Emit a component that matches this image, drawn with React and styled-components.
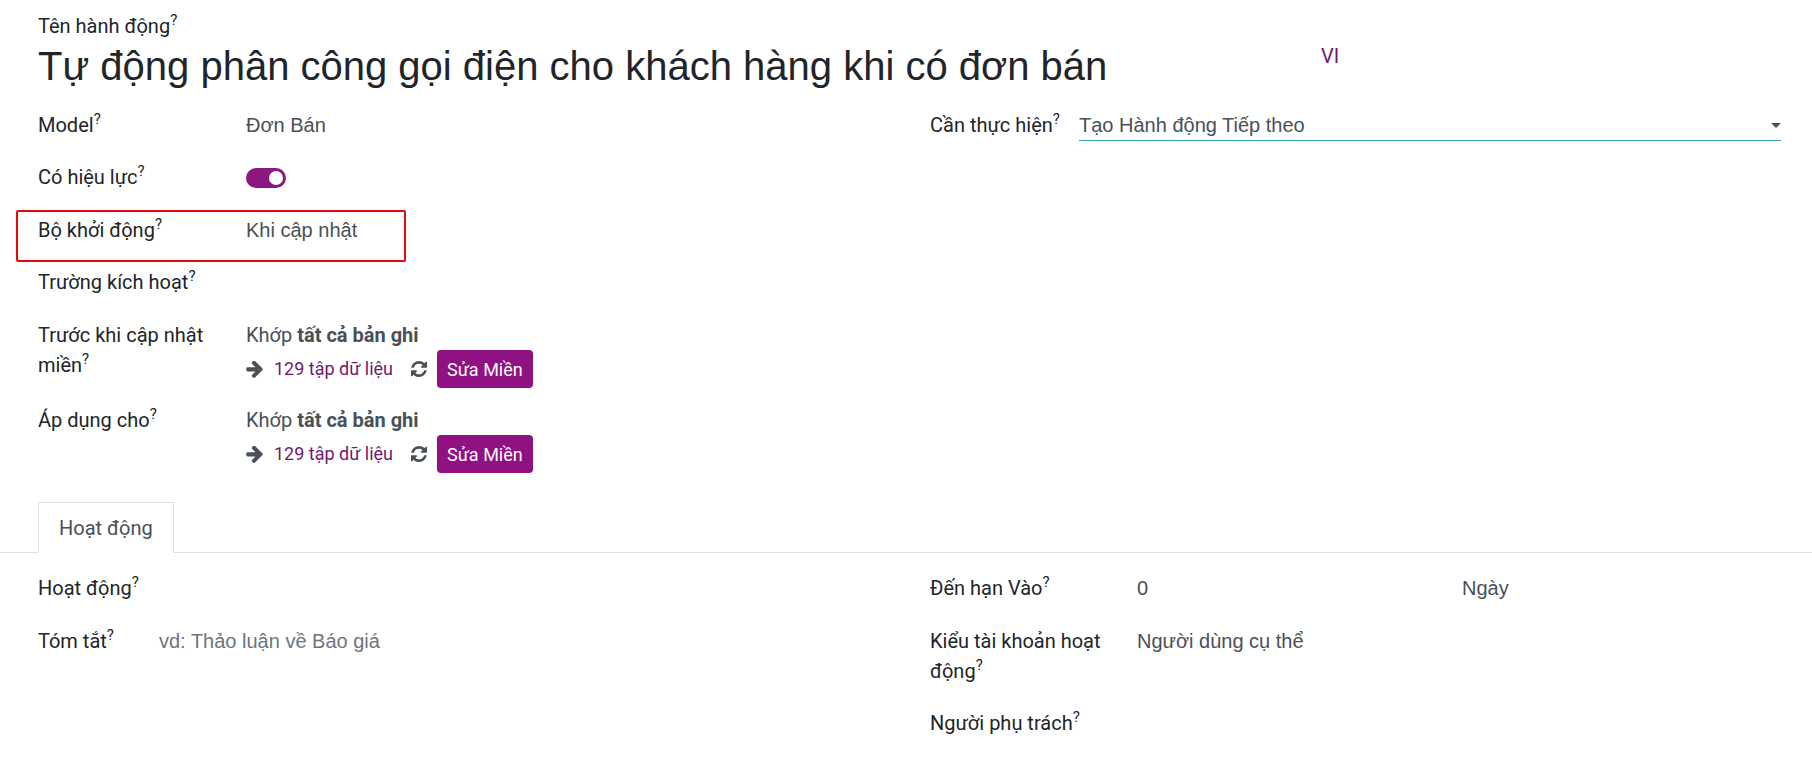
import React from 'react'
import styled, { createGlobalStyle } from 'styled-components'

const GlobalStyle = createGlobalStyle`
*, *::before, *::after {
  box-sizing: border-box;
}
body {
  margin: 0;
  background: #fff;
  color: #495057;
  font-family: Roboto, sans-serif;
  font-size: 20px;
  line-height: 30px;
}
`

const Form = styled.form`
padding-top: 11px;
`
const Header = styled.div`
padding: 0 31px 0 38px;
`
const TitleRow = styled.div`
display: flex;
align-items: flex-start;
width: 75%;
padding-right: 6px;
`
const TitleInput = styled.input`
flex: 1;
min-width: 0;
height: 50px;
padding: 0;
border: none;
outline: none;
background: transparent;
color: #212529;
font-family: "Liberation Sans", Arial, sans-serif;
font-size: 40px;
`
const LangButton = styled.button`
padding: 0;
border: none;
background: none;
color: #71196f;
font-family: inherit;
font-size: 20px;
line-height: 30px;
cursor: pointer;
`
const Columns = styled.div`
display: grid;
grid-template-columns: 1fr 1fr;
align-items: start;
gap: 41px;
padding: 0 31px 0 38px;
margin-top: 20px;
`
const MainColumns = styled(Columns)`
margin-top: 19px;
`
const Group = styled.div`
display: flex;
flex-direction: column;
gap: 17px;
`
const Row = styled.div`
display: grid;
grid-template-columns: ${(props) => props.$label || '208px'} 1fr;
align-items: start;
position: relative;
`
const MarkedRow = styled(Row)`
&::after {
  content: '';
  position: absolute;
  top: -5px;
  bottom: -12px;
  left: -22px;
  width: 390px;
  border: 2px solid #e8070b;
  border-radius: 2px;
  pointer-events: none;
}
`
const LabelText = styled.label`
display: block;
padding: 0 0 5px;
color: #212529;
`
const NameLabel = styled(LabelText)`
padding: 0;
`
const Help = styled.sup`
font-size: 15px;
line-height: 0;
vertical-align: 8px;
`
const TextInput = styled.input`
width: 100%;
min-width: 0;
height: 30px;
padding: 0;
border: none;
outline: none;
background: transparent;
color: #495057;
font-family: "Liberation Sans", Arial, sans-serif;
font-size: 20px;
&::placeholder {
  color: #6c757d;
  opacity: 1;
}
`
const RelationInput = styled(TextInput)`
height: 36px;
padding-bottom: 6px;
`
const SelectBox = styled.select`
appearance: none;
width: 100%;
height: 30px;
padding: 0;
border: none;
border-radius: 0;
outline: none;
background: transparent;
color: #495057;
font-family: "Liberation Sans", Arial, sans-serif;
font-size: 20px;
line-height: 30px;
`
const ActiveSelect = styled.div`
display: grid;
align-items: center;
border-bottom: 1px solid #2f9fa9;
height: 31px;
& > * {
  grid-area: 1 / 1;
}
`
const Caret = styled.span`
justify-self: end;
border: 5px solid transparent;
border-top-color: #495057;
border-bottom: none;
pointer-events: none;
`
const Toggle = styled.input`
appearance: none;
display: flex;
align-items: center;
justify-content: flex-end;
width: 40px;
height: 20px;
margin: 6px 0 10px;
padding: 3px;
border-radius: 10px;
background: #8c187f;
&::before {
  content: '';
  width: 14px;
  height: 14px;
  border-radius: 50%;
  background: #fff;
}
&:not(:checked) {
  justify-content: flex-start;
  background: #adb5bd;
}
`
const DomainActions = styled.div`
display: flex;
align-items: center;
height: 38px;
font-size: 18px;
`
const RecordLink = styled.a`
margin: 0 18px 0 11px;
color: #71196f;
text-decoration: none;
`
const IconButton = styled.button`
display: flex;
margin-right: 10px;
padding: 0;
border: none;
background: none;
color: #495057;
cursor: pointer;
`
const EditButton = styled.button`
height: 38px;
padding: 0 10px;
border: none;
border-radius: 4px;
background: #8f1182;
color: #fff;
font-family: inherit;
font-size: 18px;
cursor: pointer;
`
const TabBar = styled.div`
display: flex;
margin-top: 29px;
padding-left: 38px;
border-bottom: 1px solid #dee2e6;
`
const Tab = styled.button`
height: 51px;
margin-bottom: -1px;
padding: 0 20px;
border: 1px solid #dee2e6;
border-bottom-color: #fff;
background: #fff;
color: #495057;
font-family: inherit;
font-size: 20px;
`
const DueFields = styled.div`
display: grid;
grid-template-columns: 1fr 1fr;
gap: 6px;
height: 36px;
`

const ArrowIcon = () => (
  <svg width="17" height="17" viewBox="128 211 1472 1528" fill="currentColor" aria-hidden="true">
    <path d="M1600 960q0 54-37 91l-651 651q-39 37-91 37-51 0-90-37l-75-75q-38-38-38-91t38-91l293-293h-704q-52 0-84.5-37.5t-32.5-90.5v-128q0-53 32.5-90.5t84.5-37.5h704l-293-294q-38-36-38-90t38-90l75-75q38-38 90-38 53 0 91 38l651 651q37 35 37 90z" />
  </svg>
)

const RefreshIcon = () => (
  <svg width="16" height="16" viewBox="0 0 1536 1536" fill="currentColor" aria-hidden="true">
    <path d="M1511 928q0 5-1 7-64 268-268 434.5t-478 166.5q-146 0-282.5-55t-243.5-157l-129 129q-19 19-45 19t-45-19-19-45v-448q0-26 19-45t45-19h448q26 0 45 19t19 45-19 45l-137 137q71 66 161 102t187 36q134 0 250-65t186-179q11-17 53-117 8-23 30-23h192q13 0 22.5 9.5t9.5 22.5zm25-800v448q0 26-19 45t-45 19h-448q-26 0-45-19t-19-45 19-45l138-138q-148-137-349-137-134 0-250 65t-186 179q-11 17-53 117-8 23-30 23h-199q-13 0-22.5-9.5t-9.5-22.5v-7q65-268 270-434.5t480-166.5q146 0 284 55.5t245 156.5l130-129q19-19 45-19t45 19 19 45z" />
  </svg>
)

const Label = ({ id, children }) => (
  <LabelText htmlFor={id}>{children}<Help>?</Help></LabelText>
)

const Select = ({ id, value }) => (
  <SelectBox id={id} defaultValue={value}>
    <option>{value}</option>
  </SelectBox>
)

const Domain = ({ id }) => (
  <div>
    <div>Khớp <b>tất cả bản ghi</b></div>
    <DomainActions>
      <ArrowIcon />
      <RecordLink href="#records">129 tập dữ liệu</RecordLink>
      <IconButton type="button" aria-label="Làm mới"><RefreshIcon /></IconButton>
      <EditButton type="button" id={id}>Sửa Miền</EditButton>
    </DomainActions>
  </div>
)

const App = () => {
  return (
    <Form>
      <GlobalStyle />
      <Header>
        <NameLabel htmlFor="name">Tên hành động<Help>?</Help></NameLabel>
        <TitleRow>
          <TitleInput id="name" defaultValue="Tự động phân công gọi điện cho khách hàng khi có đơn bán" />
          <LangButton type="button">VI</LangButton>
        </TitleRow>
      </Header>

      <MainColumns>
        <Group>
          <Row>
            <Label id="model">Model</Label>
            <TextInput id="model" defaultValue="Đơn Bán" />
          </Row>
          <Row>
            <Label id="active">Có hiệu lực</Label>
            <Toggle id="active" type="checkbox" defaultChecked />
          </Row>
          <MarkedRow>
            <Label id="trigger">Bộ khởi động</Label>
            <Select id="trigger" value="Khi cập nhật" />
          </MarkedRow>
          <Row>
            <Label id="fields">Trường kích hoạt</Label>
            <RelationInput id="fields" />
          </Row>
          <Row>
            <Label id="before">Trước khi cập nhật miền</Label>
            <Domain id="before" />
          </Row>
          <Row>
            <Label id="apply">Áp dụng cho</Label>
            <Domain id="apply" />
          </Row>
        </Group>
        <Group>
          <Row $label="149px">
            <Label id="todo">Cần thực hiện</Label>
            <ActiveSelect>
              <Select id="todo" value="Tạo Hành động Tiếp theo" />
              <Caret />
            </ActiveSelect>
          </Row>
        </Group>
      </MainColumns>

      <TabBar role="tablist">
        <Tab type="button" role="tab" aria-selected="true">Hoạt động</Tab>
      </TabBar>

      <Columns>
        <Group>
          <Row $label="121px">
            <Label id="activity">Hoạt động</Label>
            <RelationInput id="activity" />
          </Row>
          <Row $label="121px">
            <Label id="summary">Tóm tắt</Label>
            <TextInput id="summary" placeholder="vd: Thảo luận về Báo giá" />
          </Row>
        </Group>
        <Group>
          <Row $label="207px">
            <Label id="due">Đến hạn Vào</Label>
            <DueFields>
              <TextInput id="due" defaultValue="0" />
              <SelectBox aria-label="Đơn vị" defaultValue="Ngày">
                <option>Ngày</option>
              </SelectBox>
            </DueFields>
          </Row>
          <Row $label="207px">
            <Label id="usertype">Kiểu tài khoản hoạt động</Label>
            <Select id="usertype" value="Người dùng cụ thể" />
          </Row>
          <Row $label="207px">
            <Label id="user">Người phụ trách</Label>
            <TextInput id="user" />
          </Row>
        </Group>
      </Columns>
    </Form>
  )
}

export default App
